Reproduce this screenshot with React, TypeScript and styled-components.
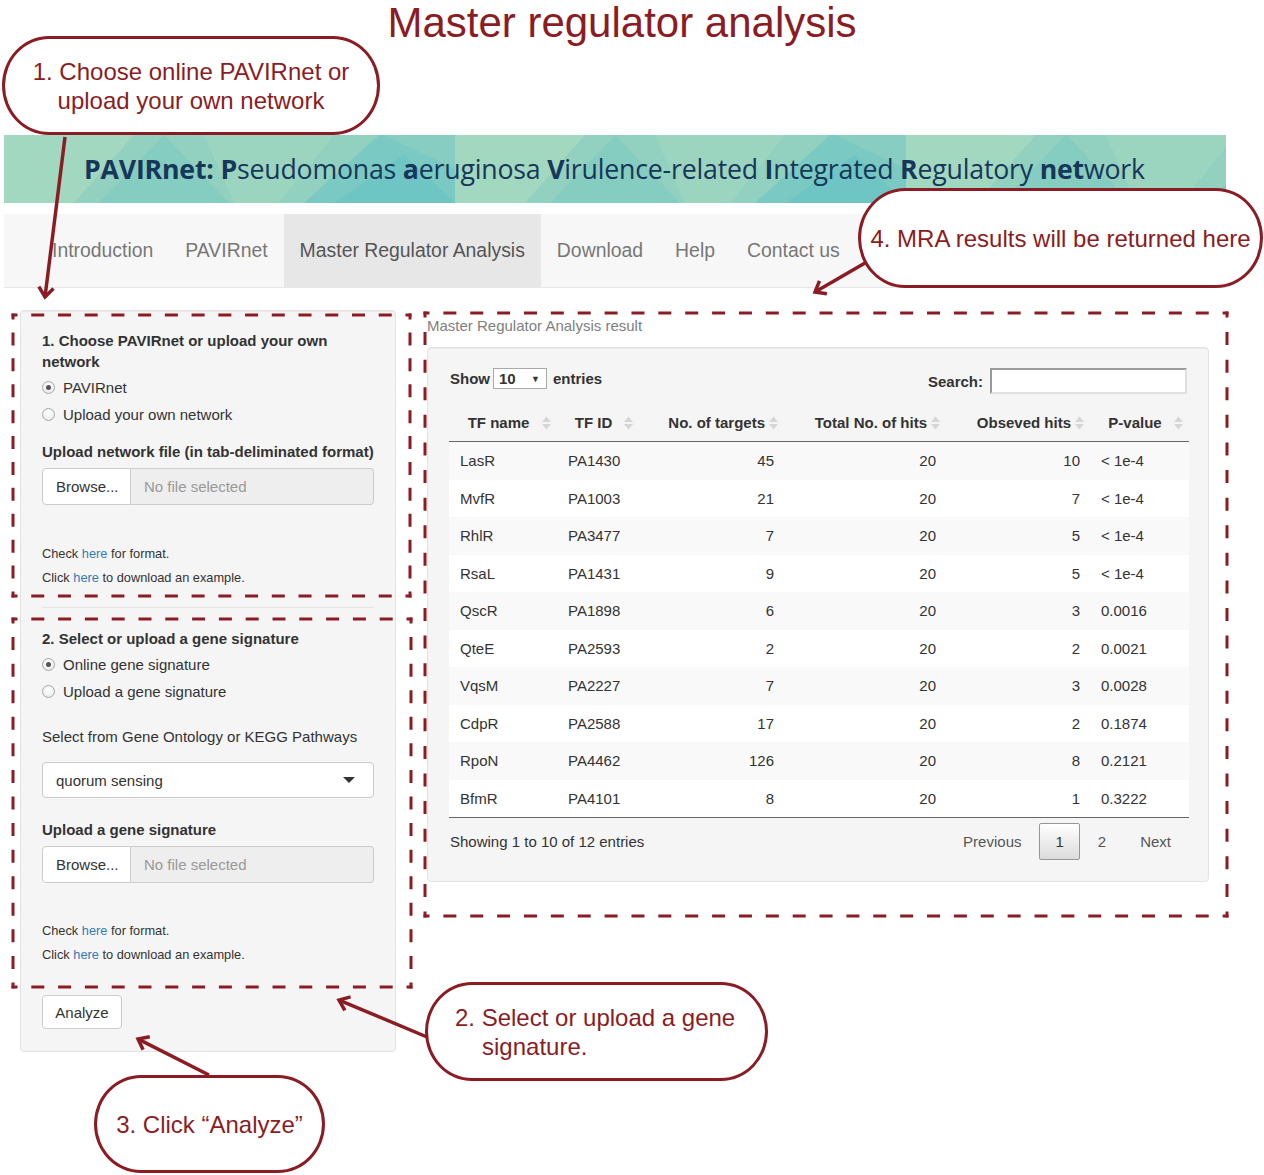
import React from "react";
import styled, { createGlobalStyle } from "styled-components";

const RED = "#8b1c24";

const GlobalStyle = createGlobalStyle`
  html, body { margin: 0; padding: 0; background: #fff; }
  body {
    font-family: "Liberation Sans", Arial, Helvetica, sans-serif;
    color: #333;
    font-size: 15px;
  }
  * { box-sizing: border-box; }
`;

const Page = styled.div`
  position: relative;
  width: 1264px;
  height: 1175px;
  overflow: hidden;
`;

const TitleRow = styled.h1`
  margin: 0;
  height: 135px;
  padding-right: 20px;
  text-align: center;
  font-weight: normal;
  font-size: 42px;
  line-height: 46px;
  color: ${RED};
`;

/* ---------- Banner ---------- */
const Banner = styled.header`
  position: relative;
  margin-left: 4px;
  width: 1222px;
  height: 68px;
  display: flex;
  align-items: center;
  padding-left: 80px;
  overflow: hidden;
  background: #92d0bf;
`;

const BannerArt = styled.svg`
  position: absolute;
  inset: 0;
  width: 100%;
  height: 100%;
`;

const BannerText = styled.div`
  position: relative;
  margin-top: -2px;
  font-family: "Open Sans", "Noto Sans", sans-serif;
  font-size: 26.7px;
  color: #16375a;
  white-space: nowrap;
  letter-spacing: -0.2px;
`;

const Strong = styled.b`
  font-weight: 700;
`;

/* ---------- Nav ---------- */
const NavBar = styled.nav`
  margin: 11px 0 0 4px;
  width: 1222px;
  height: 74px;
  background: #f7f7f7;
  border-bottom: 1px solid #e7e7e7;
  display: flex;
  padding-left: 32px;
`;

const NavItem = styled.a<{ $active?: boolean }>`
  display: block;
  padding: 0 16px;
  line-height: 73px;
  font-size: 19.4px;
  color: ${(p) => (p.$active ? "#555" : "#777")};
  background: ${(p) => (p.$active ? "#e7e7e7" : "transparent")};
  text-decoration: none;
`;

/* ---------- Main layout ---------- */
const Main = styled.main`
  display: flex;
  align-items: flex-start;
  gap: 31px;
  padding: 22px 0 0 20px;
`;

const Well = styled.section`
  background: #f5f5f5;
  border: 1px solid #e3e3e3;
  border-radius: 4px;
  box-shadow: inset 0 1px 1px rgba(0, 0, 0, 0.05);
`;

const LeftWell = styled(Well)`
  width: 376px;
  padding: 19px 21px 22px;
`;

const SectionLabel = styled.div<{ $mt?: number; $bold?: boolean }>`
  margin-top: ${(p) => p.$mt ?? 0}px;
  font-weight: ${(p) => (p.$bold === false ? "normal" : "bold")};
  line-height: 21px;
  white-space: ${(p) => (p.$bold === false ? "nowrap" : "normal")};
`;

const NoWrapLabel = styled(SectionLabel)`
  white-space: nowrap;
`;

const RadioList = styled.div`
  margin-top: 2px;
`;

const RadioRow = styled.label`
  display: flex;
  align-items: center;
  gap: 8px;
  height: 27px;
`;

const RadioDot = styled.span<{ $checked?: boolean }>`
  position: relative;
  width: 13px;
  height: 13px;
  border-radius: 50%;
  border: 1px solid #a7a7a7;
  background: radial-gradient(circle at 50% 35%, #ffffff 0%, #e6e6e6 100%);
  &::after {
    content: "";
    display: ${(p) => (p.$checked ? "block" : "none")};
    position: absolute;
    left: 3px;
    top: 3px;
    width: 5px;
    height: 5px;
    border-radius: 50%;
    background: #555;
  }
`;

const FileInput = styled.div<{ $mt?: number }>`
  margin-top: ${(p) => p.$mt ?? 6}px;
  display: flex;
  height: 37px;
`;

const BrowseButton = styled.span`
  width: 89px;
  display: flex;
  align-items: center;
  padding-left: 13px;
  background: #fff;
  border: 1px solid #ccc;
  border-radius: 4px 0 0 4px;
  color: #333;
`;

const FileName = styled.span`
  flex: 1;
  display: flex;
  align-items: center;
  padding-left: 13px;
  background: #eeeeee;
  border: 1px solid #ccc;
  border-left: none;
  border-radius: 0 4px 4px 0;
  color: #999;
`;

const HelpBlock = styled.div<{ $mt?: number }>`
  margin-top: ${(p) => p.$mt ?? 40}px;
  display: flex;
  flex-direction: column;
  gap: 6px;
  font-size: 12.8px;
  line-height: 18px;
  color: #333;
`;

const Link = styled.a`
  color: #337ab7;
  text-decoration: none;
`;

const Divider = styled.hr`
  margin: 20px 0 0;
  border: none;
  border-top: 1px solid #e5e5e5;
  height: 0;
`;

const SelectBox = styled.div`
  margin-top: 15px;
  height: 36px;
  display: flex;
  align-items: center;
  justify-content: space-between;
  padding: 0 18px 0 13px;
  background: #fff;
  border: 1px solid #ccc;
  border-radius: 4px;
  color: #333;
`;

const Caret = styled.span`
  width: 0;
  height: 0;
  border-left: 6px solid transparent;
  border-right: 6px solid transparent;
  border-top: 6px solid #333;
`;

const ActionButton = styled.button`
  margin-top: 31px;
  width: 80px;
  height: 34px;
  background: #fff;
  border: 1px solid #ccc;
  border-radius: 4px;
  font-family: inherit;
  font-size: 15px;
  color: #333;
  display: block;
`;

/* ---------- Right column ---------- */
const RightCol = styled.div`
  width: 782px;
`;

const ResultTitle = styled.div`
  margin-top: 5px;
  line-height: 21px;
  color: #808080;
`;

const RightWell = styled(Well)`
  margin-top: 11px;
  height: 535px;
  padding: 20px 21px 21px;
`;

const Controls = styled.div`
  display: flex;
  justify-content: space-between;
  align-items: flex-start;
  height: 26px;
`;

const ShowGroup = styled.div`
  display: flex;
  align-items: center;
  height: 21px;
  font-weight: bold;
  padding-left: 1px;
`;

const LengthSelect = styled.span`
  margin: 0 6px 0 3px;
  width: 54px;
  height: 21px;
  display: flex;
  align-items: center;
  justify-content: space-between;
  padding: 0 6px 0 5px;
  background: #fff;
  border: 1px solid #aaa;
  font-weight: bold;
`;

const SmallCaret = styled.span`
  font-size: 9px;
  color: #333;
`;

const SearchGroup = styled.label`
  display: flex;
  align-items: center;
  gap: 7px;
  height: 26px;
  font-weight: bold;
`;

const SearchInput = styled.span`
  width: 197px;
  height: 26px;
  background: #fff;
  border: 2px solid;
  border-color: #9a9a9a #e0e0e0 #e0e0e0 #9a9a9a;
`;

const Table = styled.table`
  margin-top: 10px;
  width: 740px;
  table-layout: fixed;
  border-collapse: separate;
  border-spacing: 0;
  border-bottom: 1px solid #666;
`;

const HeadRow = styled.tr`
  height: 38px;
`;

const Th = styled.th<{ $align: string }>`
  position: relative;
  padding: 0 19px 0 10px;
  text-align: ${(p) => p.$align};
  font-weight: bold;
  border-bottom: 1px solid #666;
  white-space: nowrap;
`;

const SortIcon = styled.svg`
  position: absolute;
  right: 6px;
  top: 50%;
  transform: translateY(-50%);
`;

const BodyRow = styled.tr<{ $odd: boolean }>`
  height: 37.5px;
  background: ${(p) => (p.$odd ? "#f9f9f9" : "#fff")};
  & + & td {
    border-top: 1px solid #ddd;
  }
`;

const Td = styled.td<{ $align: string }>`
  padding: 0 10px 0 11px;
  text-align: ${(p) => p.$align};
  white-space: nowrap;
`;

const Footer = styled.div`
  margin-top: 5px;
  height: 37px;
  display: flex;
  align-items: center;
  justify-content: space-between;
  padding-left: 1px;
`;

const Pagination = styled.div`
  display: flex;
  align-items: center;
`;

const PageButton = styled.span<{ $current?: boolean }>`
  margin-left: 2px;
  height: 37px;
  padding: 0 15px;
  display: flex;
  align-items: center;
  border: 1px solid ${(p) => (p.$current ? "#979797" : "transparent")};
  border-radius: 2px;
  background: ${(p) =>
    p.$current ? "linear-gradient(to bottom, #ffffff 0%, #dcdcdc 100%)" : "transparent"};
  color: ${(p) => (p.$current ? "#333" : "#555")};
`;

/* ---------- Annotations ---------- */
const Overlay = styled.svg`
  position: absolute;
  left: 0;
  top: 0;
  pointer-events: none;
`;

const Callout = styled.div<{ $left: number; $top: number; $w: number; $h: number; $align?: string; $pl?: number }>`
  position: absolute;
  left: ${(p) => p.$left}px;
  top: ${(p) => p.$top}px;
  width: ${(p) => p.$w}px;
  height: ${(p) => p.$h}px;
  border: 3px solid ${RED};
  border-radius: 47px / 50%;
  background: #fff;
  display: flex;
  align-items: center;
  justify-content: ${(p) => p.$align ?? "center"};
  padding-left: ${(p) => p.$pl ?? 0}px;
  font-size: 24px;
  line-height: 29px;
  color: ${RED};
  text-align: center;
`;

const HangText = styled.div`
  text-align: left;
  padding-left: 27px;
  text-indent: -27px;
`;

/* ---------- helpers ---------- */
function dashPattern(L: number): string {
  const corner = 6;
  const dash = 13;
  const n = Math.max(1, Math.round((L - 2 * corner - 14) / 27));
  const gap = (L - 2 * corner - n * dash) / (n + 1);
  const arr: number[] = [corner];
  for (let i = 0; i < n; i++) arr.push(gap, dash);
  arr.push(gap, corner + 20);
  return arr.map((v) => v.toFixed(2)).join(" ");
}

function DashedBox({ x1, y1, x2, y2 }: { x1: number; y1: number; x2: number; y2: number }) {
  const e = 1.5;
  const edges = [
    [x1 - e, y1, x2 + e, y1],
    [x1 - e, y2, x2 + e, y2],
    [x1, y1 - e, x1, y2 + e],
    [x2, y1 - e, x2, y2 + e],
  ];
  return (
    <g stroke={RED} strokeWidth={3} fill="none">
      {edges.map(([a, b, c, d], i) => (
        <line key={i} x1={a} y1={b} x2={c} y2={d} strokeDasharray={dashPattern(Math.hypot(c - a, d - b))} />
      ))}
    </g>
  );
}

function Arrow({ x1, y1, x2, y2 }: { x1: number; y1: number; x2: number; y2: number }) {
  const dx = x2 - x1;
  const dy = y2 - y1;
  const len = Math.hypot(dx, dy);
  const ux = dx / len;
  const uy = dy / len;
  const bx = -ux;
  const by = -uy;
  const a = (38 * Math.PI) / 180;
  const c = Math.cos(a);
  const s = Math.sin(a);
  const h = 12;
  const p1 = [x2 + h * (bx * c - by * s), y2 + h * (bx * s + by * c)];
  const p2 = [x2 + h * (bx * c + by * s), y2 + h * (-bx * s + by * c)];
  return (
    <g stroke={RED} strokeWidth={3.5} fill="none">
      <line x1={x1} y1={y1} x2={x2 - ux * 2} y2={y2 - uy * 2} />
      <polyline points={`${p1[0]},${p1[1]} ${x2},${y2} ${p2[0]},${p2[1]}`} strokeLinejoin="miter" />
    </g>
  );
}

/* ---------- data ---------- */
const columns = [
  { label: "TF name", w: 108, head: "center", body: "left" },
  { label: "TF ID", w: 82, head: "center", body: "left" },
  { label: "No. of targets", w: 145, head: "right", body: "right" },
  { label: "Total No. of hits", w: 162, head: "right", body: "right" },
  { label: "Obseved hits", w: 144, head: "right", body: "right" },
  { label: "P-value", w: 99, head: "center", body: "left" },
];

const rows = [
  ["LasR", "PA1430", "45", "20", "10", "< 1e-4"],
  ["MvfR", "PA1003", "21", "20", "7", "< 1e-4"],
  ["RhlR", "PA3477", "7", "20", "5", "< 1e-4"],
  ["RsaL", "PA1431", "9", "20", "5", "< 1e-4"],
  ["QscR", "PA1898", "6", "20", "3", "0.0016"],
  ["QteE", "PA2593", "2", "20", "2", "0.0021"],
  ["VqsM", "PA2227", "7", "20", "3", "0.0028"],
  ["CdpR", "PA2588", "17", "20", "2", "0.1874"],
  ["RpoN", "PA4462", "126", "20", "8", "0.2121"],
  ["BfmR", "PA4101", "8", "20", "1", "0.3222"],
];

const navItems = ["Introduction", "PAVIRnet", "Master Regulator Analysis", "Download", "Help", "Contact us"];

function BannerPattern() {
  const tiles = [0, 451, 902];
  return (
    <BannerArt viewBox="0 0 1222 68" preserveAspectRatio="none">
      {tiles.map((o) => (
        <g key={o} transform={`translate(${o} 0)`}>
          <polygon points="0,0 130,0 70,68 0,68" fill="#a2d7c0" />
          <polygon points="95,68 160,0 225,68" fill="#86cdc1" />
          <polygon points="200,0 330,0 275,68 230,68" fill="#9bd5bf" />
          <polygon points="300,68 375,0 451,0 451,68" fill="#7ac9c2" />
          <polygon points="380,0 451,0 451,34" fill="#87cdc1" />
          <polygon points="330,68 400,20 451,68" fill="#6fc5c3" />
        </g>
      ))}
    </BannerArt>
  );
}

function Radio({ checked, label }: { checked?: boolean; label: string }) {
  return (
    <RadioRow>
      <RadioDot $checked={checked} />
      {label}
    </RadioRow>
  );
}

function SortArrows() {
  return (
    <SortIcon width="9" height="16" viewBox="0 0 9 16">
      <polygon points="0,7 4.5,1.5 9,7" fill="#d6d6d6" />
      <polygon points="0,9 4.5,14.5 9,9" fill="#d6d6d6" />
    </SortIcon>
  );
}

export default function App() {
  return (
    <Page>
      <GlobalStyle />
      <TitleRow>Master regulator analysis</TitleRow>

      <Banner>
        <BannerPattern />
        <BannerText>
          <Strong>PAVIRnet: P</Strong>seudomonas <Strong>a</Strong>eruginosa <Strong>V</Strong>irulence-related{" "}
          <Strong>I</Strong>ntegrated <Strong>R</Strong>egulatory <Strong>net</Strong>work
        </BannerText>
      </Banner>

      <NavBar>
        {navItems.map((n) => (
          <NavItem key={n} $active={n === "Master Regulator Analysis"}>
            {n}
          </NavItem>
        ))}
      </NavBar>

      <Main>
        <LeftWell>
          <SectionLabel>1. Choose PAVIRnet or upload your own network</SectionLabel>
          <RadioList>
            <Radio checked label="PAVIRnet" />
            <Radio label="Upload your own network" />
          </RadioList>
          <NoWrapLabel $mt={13}>Upload network file (in tab-deliminated format)</NoWrapLabel>
          <FileInput>
            <BrowseButton>Browse...</BrowseButton>
            <FileName>No file selected</FileName>
          </FileInput>
          <HelpBlock $mt={40}>
            <span>
              Check <Link>here</Link> for format.
            </span>
            <span>
              Click <Link>here</Link> to download an example.
            </span>
          </HelpBlock>
          <Divider />

          <SectionLabel $mt={20}>2. Select or upload a gene signature</SectionLabel>
          <RadioList>
            <Radio checked label="Online gene signature" />
            <Radio label="Upload a gene signature" />
          </RadioList>
          <SectionLabel $mt={21} $bold={false}>
            Select from Gene Ontology or KEGG Pathways
          </SectionLabel>
          <SelectBox>
            quorum sensing
            <Caret />
          </SelectBox>
          <SectionLabel $mt={21}>Upload a gene signature</SectionLabel>
          <FileInput>
            <BrowseButton>Browse...</BrowseButton>
            <FileName>No file selected</FileName>
          </FileInput>
          <HelpBlock $mt={39}>
            <span>
              Check <Link>here</Link> for format.
            </span>
            <span>
              Click <Link>here</Link> to download an example.
            </span>
          </HelpBlock>
          <ActionButton>Analyze</ActionButton>
        </LeftWell>

        <RightCol>
          <ResultTitle>Master Regulator Analysis result</ResultTitle>
          <RightWell>
            <Controls>
              <ShowGroup>
                Show
                <LengthSelect>
                  10 <SmallCaret>▼</SmallCaret>
                </LengthSelect>
                entries
              </ShowGroup>
              <SearchGroup>
                Search:
                <SearchInput />
              </SearchGroup>
            </Controls>

            <Table>
              <colgroup>
                {columns.map((c) => (
                  <col key={c.label} style={{ width: c.w }} />
                ))}
              </colgroup>
              <thead>
                <HeadRow>
                  {columns.map((c) => (
                    <Th key={c.label} $align={c.head}>
                      {c.label}
                      <SortArrows />
                    </Th>
                  ))}
                </HeadRow>
              </thead>
              <tbody>
                {rows.map((r, i) => (
                  <BodyRow key={r[0]} $odd={i % 2 === 0}>
                    {r.map((v, j) => (
                      <Td key={j} $align={columns[j].body}>
                        {v}
                      </Td>
                    ))}
                  </BodyRow>
                ))}
              </tbody>
            </Table>

            <Footer>
              <span>Showing 1 to 10 of 12 entries</span>
              <Pagination>
                <PageButton>Previous</PageButton>
                <PageButton $current>1</PageButton>
                <PageButton>2</PageButton>
                <PageButton>Next</PageButton>
              </Pagination>
            </Footer>
          </RightWell>
        </RightCol>
      </Main>

      <Overlay width={1264} height={1175} viewBox="0 0 1264 1175">
        <DashedBox x1={13} y1={315} x2={410} y2={596} />
        <DashedBox x1={13} y1={619} x2={411} y2={987} />
        <DashedBox x1={425} y1={313} x2={1227} y2={916} />
        <Arrow x1={65} y1={137} x2={45} y2={297} />
        <Arrow x1={865} y1={263} x2={815} y2={292} />
        <Arrow x1={427} y1={1037} x2={339} y2={1000} />
        <Arrow x1={209} y1={1075} x2={138} y2={1039} />
      </Overlay>

      <Callout $left={2} $top={36} $w={378} $h={99}>
        1. Choose online PAVIRnet or
        <br />
        upload your own network
      </Callout>
      <Callout $left={858} $top={188} $w={405} $h={100}>
        4. MRA results will be returned here
      </Callout>
      <Callout $left={425} $top={982} $w={343} $h={99} $align="flex-start" $pl={27}>
        <HangText>2. Select or upload a gene signature.</HangText>
      </Callout>
      <Callout $left={94} $top={1075} $w={231} $h={98}>
        3. Click “Analyze”
      </Callout>
    </Page>
  );
}
